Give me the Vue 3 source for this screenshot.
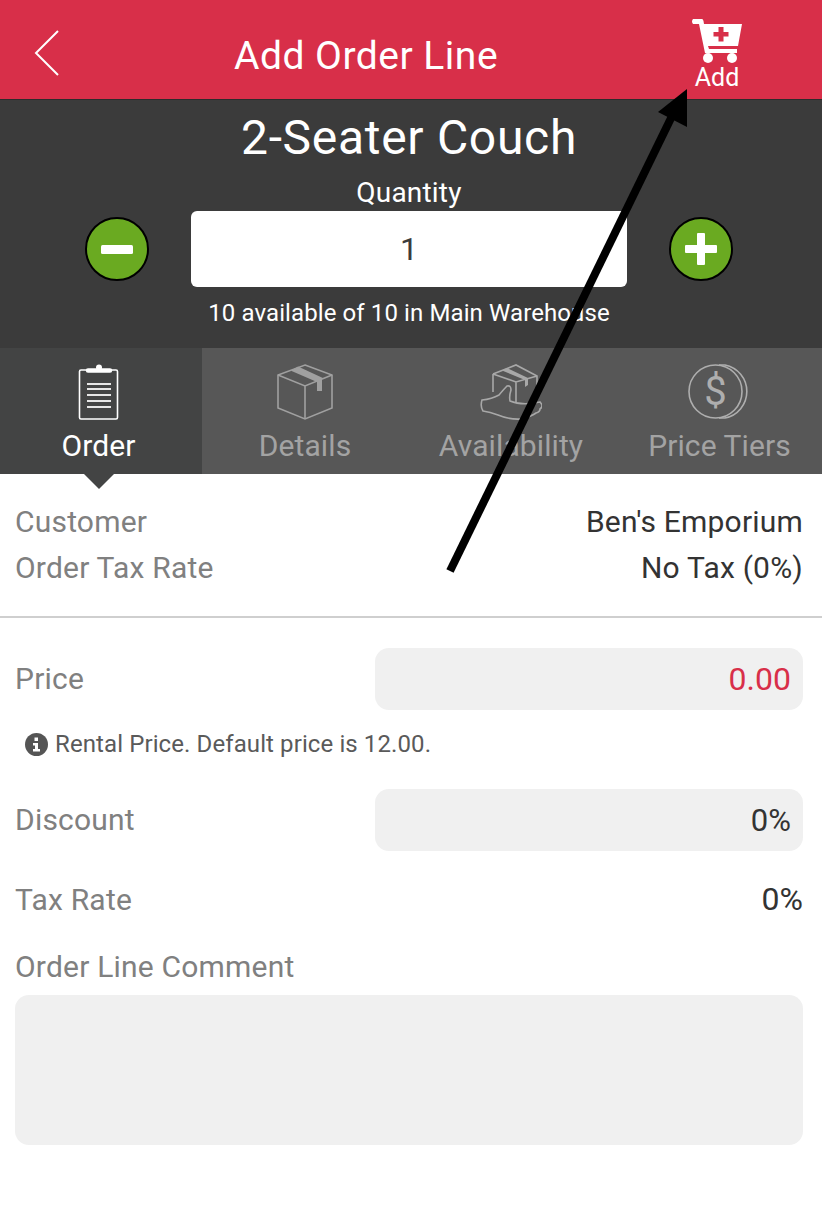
<template>
  <div class="screen">
    <header class="topbar">
      <svg class="back" width="28" height="48" viewBox="0 0 28 48">
        <path d="M25 2 L3 24 L25 46" fill="none" stroke="#fff" stroke-width="2" />
      </svg>
      <h1 class="title">Add Order Line</h1>
      <div class="add">
        <svg width="52" height="46" viewBox="0 0 52 46">
          <path d="M2 1 H11 Q12 1 12.5 3 L13 6 H51 L47 28 H17 L18 31 H46 V35 H14 L8 6 H2 Q0 3.5 2 1 Z" fill="#fff" />
          <circle cx="17" cy="40" r="5" fill="#fff" />
          <circle cx="41" cy="40" r="5" fill="#fff" />
          <path d="M27.5 9 H32.5 V14 H37.5 V18.5 H32.5 V23.5 H27.5 V18.5 H22.5 V14 H27.5 Z" fill="#d82f49" />
        </svg>
        <span>Add</span>
      </div>
    </header>

    <section class="product">
      <h2 class="name">2-Seater Couch</h2>
      <div class="qty-label">Quantity</div>
      <div class="qty-row">
        <button class="round">
          <svg width="32" height="32" viewBox="0 0 32 32"><rect x="0" y="12" width="32" height="9" rx="1.5" fill="#fff" /></svg>
        </button>
        <div class="qty-box">1</div>
        <button class="round">
          <svg width="32" height="32" viewBox="0 0 32 32"><path d="M12 1 Q12 0 13 0 H19 Q20 0 20 1 V12 H31 Q32 12 32 13 V19 Q32 20 31 20 H20 V31 Q20 32 19 32 H13 Q12 32 12 31 V20 H1 Q0 20 0 19 V13 Q0 12 1 12 H12 Z" fill="#fff" /></svg>
        </button>
      </div>
      <div class="stock">10 available of 10 in Main Warehouse</div>
    </section>

    <nav class="tabs">
      <div class="tab active">
        <svg width="42" height="56" viewBox="0 0 42 56" fill="none" stroke="#fff">
          <rect x="1.5" y="6" width="38" height="49" rx="1.5" stroke-width="1.6" />
          <path d="M10 6.5 H32" stroke-width="4.5" stroke-linecap="round" />
          <circle cx="21" cy="3.5" r="3" fill="#fff" stroke="none" />
          <path d="M9 20 H33 M9 25 H33 M9 31 H33 M9 37 H33 M9 43 H33" stroke="#e6e6e6" stroke-width="1.8" />
        </svg>
        <span>Order</span>
        <i class="caret"></i>
      </div>
      <div class="tab">
        <svg width="56" height="56" viewBox="0 0 56 56" fill="none" stroke="#a0a0a0" stroke-width="1.6">
          <path d="M28 1 L55 11 V44 L28 55 L1 44 V11 Z" />
          <path d="M1 11 L28 22 L55 11 M28 22 V55" />
          <path d="M21 2.5 L47.5 14.7 L45 15 V27 H40 V18 L14 6.7 Z" fill="#a0a0a0" stroke="none" />
        </svg>
        <span>Details</span>
      </div>
      <div class="tab">
        <svg width="62" height="56" viewBox="0 0 62 56" fill="none" stroke="#a8a8a8" stroke-width="1.6">
          <path d="M13 10 L36 1 L57 12 V30 M13 10 V28 M13 10 L36 18 L57 12 M36 18 V38" />
          <path d="M22 6.5 L45 16 V23 L48 21 V14 L27 4 Z" fill="#a8a8a8" stroke="none" />
          <path d="M2 36 Q12 35 19 31 Q24 25 27 22 Q31 21 31 26 Q29 32 30 37 Q42 42 60 38 Q64 42 60 45 Q60 48 56 49 Q52 52 42 55 Q30 56 18 51 Q10 48 3 47 Q0 42 2 36 Z" />
        </svg>
        <span>Availability</span>
      </div>
      <div class="tab last">
        <svg class="coin" width="66" height="56" viewBox="0 0 66 56" fill="none" stroke="#aeaeae" stroke-width="1.6">
          <circle cx="27.5" cy="27.5" r="26.5" />
          <path d="M31 1 H37 A27 27 0 0 1 37 54 H31" />
          <text x="27.5" y="41" text-anchor="middle" class="dollar">$</text>
        </svg>
        <span>Price Tiers</span>
      </div>
    </nav>

    <section class="summary">
      <div class="info-row"><span class="label">Customer</span><span class="value">Ben's Emporium</span></div>
      <div class="info-row"><span class="label">Order Tax Rate</span><span class="value">No Tax (0%)</span></div>
    </section>

    <section class="form">
      <div class="field">
        <span class="label">Price</span>
        <div class="input price">0.00</div>
      </div>
      <div class="hint">
        <svg width="23" height="23" viewBox="0 0 23 23">
          <circle cx="11.5" cy="11.5" r="11.5" fill="#555" />
          <path d="M9.5 4.5 H13 V8 H9.5 Z M8 10 H13 V16 H15 V18.5 H8 V16 H10 V12.5 H8 Z" fill="#fff" />
        </svg>
        <span>Rental Price. Default price is 12.00.</span>
      </div>
      <div class="field discount">
        <span class="label">Discount</span>
        <div class="input">0%</div>
      </div>
      <div class="info-row tax"><span class="label">Tax Rate</span><span class="value">0%</span></div>
      <div class="label comment-label">Order Line Comment</div>
      <div class="comment"></div>
    </section>

    <!-- annotation arrow that lies over the screenshot -->
    <svg class="arrow" width="822" height="600" viewBox="0 0 822 600">
      <path d="M450 571 L674 112" stroke="#000" stroke-width="8" fill="none" />
      <path d="M687 89 L658 112 L687 127 Z" fill="#000" />
    </svg>
  </div>
</template>

<script setup>
</script>

<style>
body {
  background: #fff;
}
</style>

<style scoped>
.screen {
  position: relative;
  width: 822px;
  height: 1222px;
  overflow: hidden;
  background: #fff;
  font-family: Roboto, "Liberation Sans", sans-serif;
}

.topbar {
  position: relative;
  height: 100px;
  box-sizing: border-box;
  background: #d82f49;
  border-bottom: 1px solid #2c2c2c;
  display: flex;
  align-items: center;
  padding-left: 33px;
  color: #fff;
}

.back {
  flex: none;
  margin-top: 7px;
}

.title {
  margin: 12px 0 0 173px;
  font-size: 39px;
  font-weight: 400;
  line-height: 44px;
  letter-spacing: 0.5px;
}

.add {
  position: absolute;
  top: 18px;
  left: 691px;
  display: flex;
  flex-direction: column;
  align-items: center;
  font-size: 25px;
  line-height: 28px;
}

.product {
  height: 248px;
  box-sizing: border-box;
  background: #3b3b3b;
  color: #fff;
  display: flex;
  flex-direction: column;
  align-items: center;
  padding: 10px 4px 0 0;
}

.name {
  margin: 0;
  font-size: 48px;
  font-weight: 400;
  line-height: 56px;
  letter-spacing: 0.7px;
}

.qty-label {
  margin-top: 11px;
  font-size: 28px;
  line-height: 32px;
  letter-spacing: 0.2px;
}

.qty-row {
  margin-top: 2px;
  display: flex;
  align-items: center;
  gap: 42px;
}

.round {
  width: 64px;
  height: 64px;
  padding: 0;
  border: 2px solid #000;
  border-radius: 50%;
  background: #6aaa21;
  display: flex;
  align-items: center;
  justify-content: center;
}

.qty-box {
  width: 436px;
  height: 76px;
  background: #fff;
  border-radius: 6px;
  color: #3b3b3b;
  font-size: 32px;
  line-height: 76px;
  text-align: center;
}

.stock {
  margin-top: 12px;
  font-size: 24px;
  line-height: 28px;
  letter-spacing: 0.1px;
}

.tabs {
  height: 126px;
  display: grid;
  grid-template-columns: 202px 206px 206px 208px;
  background: #575757;
}

.tab {
  position: relative;
  display: flex;
  flex-direction: column;
  align-items: center;
  padding-top: 16px;
  box-sizing: border-box;
  font-size: 30px;
  line-height: 36px;
  letter-spacing: 0.1px;
  color: #a3a3a3;
}

.tab span {
  margin-top: 8px;
}

.tab.active {
  background: #434444;
  color: #fff;
  padding-right: 5px;
}

.tab.last {
  padding-left: 3px;
}

.coin {
  margin-left: 2px;
}

.caret {
  position: absolute;
  left: 84px;
  top: 126px;
  border-left: 15px solid transparent;
  border-right: 15px solid transparent;
  border-top: 15px solid #434444;
}

.dollar {
  font-size: 40px;
  fill: #aeaeae;
  stroke: none;
}

.summary {
  height: 144px;
  box-sizing: border-box;
  border-bottom: 2px solid #cfcfcf;
  padding: 30px 19px 0 15px;
  display: flex;
  flex-direction: column;
  gap: 11px;
}

.info-row {
  display: flex;
  justify-content: space-between;
  line-height: 35px;
}

.label {
  font-size: 30px;
  line-height: 35px;
  letter-spacing: 0.2px;
  color: #808080;
}

.field .label {
  margin-top: -2px;
}

.value {
  font-size: 30px;
  letter-spacing: 0.2px;
  color: #333;
}

.form {
  padding: 30px 19px 0 15px;
}

.field {
  display: flex;
  justify-content: space-between;
  align-items: center;
}

.input {
  width: 428px;
  height: 62px;
  box-sizing: border-box;
  padding-right: 12px;
  background: #f0f0f0;
  border-radius: 14px;
  text-align: right;
  font-size: 31px;
  line-height: 64px;
  color: #333;
}

.price {
  font-size: 32px;
  line-height: 62px;
  color: #d82f49;
}

.hint {
  margin: 21px 0 0 10px;
  display: flex;
  align-items: center;
  gap: 7px;
  font-size: 24px;
  line-height: 26px;
  letter-spacing: 0.1px;
  color: #5a5a5a;
}

.discount {
  margin-top: 32px;
}

.tax {
  margin-top: 31px;
}

.tax .value {
  font-size: 32px;
  letter-spacing: 0;
}

.comment-label {
  margin-top: 32px;
}

.comment {
  margin-top: 11px;
  height: 150px;
  background: #f0f0f0;
  border-radius: 14px;
}

.arrow {
  position: absolute;
  top: 0;
  left: 0;
  pointer-events: none;
}
</style>
